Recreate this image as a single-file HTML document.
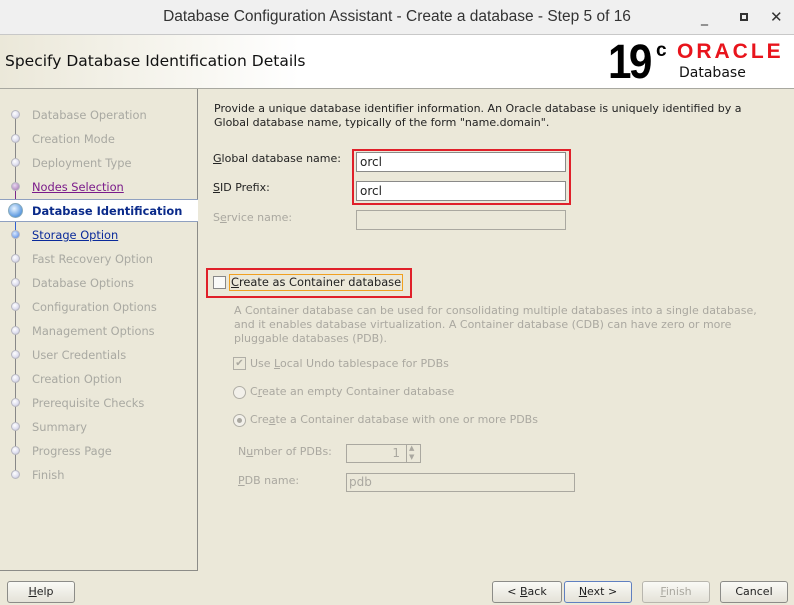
<!DOCTYPE html><html><head><style>
*{margin:0;padding:0;box-sizing:border-box}
body{width:794px;height:605px;background:#ebe8d9;font-family:"DejaVu Sans",sans-serif;font-size:11px;position:relative;overflow:hidden;color:#222}
.a{position:absolute}
.tb{left:0;top:0;width:794px;height:35px;background:#f0f0f0;border-bottom:1px solid #c8c8c8}
.hd{left:0;top:35px;width:794px;height:54px;background:linear-gradient(90deg,#ebe8d9 0,#fff 300px);border-bottom:1px solid #a8a8a0}
.lp{left:0;top:89px;width:198px;height:482px;border-right:1px solid #8c8c88;border-bottom:1px solid #8c8c88}
.st{left:32px;color:#a9a9a2;white-space:nowrap;font-size:11.4px}
.dot{left:11px;width:9px;height:9px;border-radius:50%;background:radial-gradient(circle at 40% 35%,#fff,#dde 60%,#aab);border:1px solid #b8b8c0}
.in{background:#fff;border:1px solid #8a8a88;height:20px;padding:2px 3px;font-size:12px}
.btn{height:22px;top:581px;border:1px solid #8c8c88;border-radius:3px;background:linear-gradient(#fafaf6,#e4e2d8);text-align:center;line-height:20px;font-size:11px}
.g{color:#aaa8a0}
u{text-decoration:underline}
</style></head><body>
<div class="a tb"></div>
<div class="a" style="left:0;top:8px;width:794px;text-align:center;font-family:'Liberation Sans';font-size:15.5px;color:#333">Database Configuration Assistant - Create a database - Step 5 of 16</div>
<div class="a" style="left:701px;top:10px;font-size:14px;color:#333">_</div>
<div class="a" style="left:740px;top:13px;width:8px;height:8px;border:2px solid #333"></div>
<div class="a" style="left:770px;top:8px;font-size:15px;color:#333">✕</div>
<div class="a hd"></div>
<div class="a" style="left:5px;top:52px;font-size:15.5px;color:#111">Specify Database Identification Details</div>
<div class="a" style="left:608px;top:38px;font-family:'Liberation Sans';font-weight:bold;font-size:48px;letter-spacing:-3px;color:#000;line-height:50px;transform:scaleX(.88);transform-origin:left">19</div>
<div class="a" style="left:656px;top:40px;font-family:'Liberation Sans';font-weight:bold;font-size:19px;color:#000">c</div>
<div class="a" style="left:677px;top:40px;font-family:'Liberation Sans';font-weight:bold;font-size:21px;color:#e8141c;letter-spacing:3px">ORACLE</div>
<div class="a" style="left:679px;top:65px;font-size:14px;color:#111">Database</div>
<div class="a lp"></div>
<div class="a" style="left:15px;top:112px;width:1px;height:80px;background:#888"></div>
<div class="a" style="left:15px;top:185px;width:1px;height:22px;background:#7a2a8a"></div>
<div class="a" style="left:15px;top:212px;width:1px;height:24px;background:#3060d0"></div>
<div class="a" style="left:15px;top:238px;width:1px;height:236px;background:#888"></div>
<div class="a" style="left:0;top:199px;width:198px;height:23px;background:#fff;border-top:1px solid #8fa0c0;border-bottom:1px solid #8fa0c0"></div>
<div class="a dot" style="top:110px"></div><div class="a st" style="top:108px">Database Operation</div>
<div class="a dot" style="top:134px"></div><div class="a st" style="top:132px">Creation Mode</div>
<div class="a dot" style="top:158px"></div><div class="a st" style="top:156px">Deployment Type</div>
<div class="a dot" style="top:182px;background:radial-gradient(circle at 40% 35%,#e8d8f0,#a070b0)"></div><div class="a st" style="top:180px;color:#7a1a8a"><u>Nodes Selection</u></div>
<div class="a" style="left:8px;top:203px;width:15px;height:15px;border-radius:50%;background:radial-gradient(circle at 40% 35%,#e8f4ff,#5d9ae0 70%,#3a70c0);border:1px solid #8ab"></div><div class="a st" style="top:204px;color:#0a2a8a;font-weight:bold">Database Identification</div>
<div class="a dot" style="top:230px;background:radial-gradient(circle at 40% 35%,#d8e8ff,#4a80e0)"></div><div class="a st" style="top:228px;color:#0a2a9a"><u>Storage Option</u></div>
<div class="a dot" style="top:254px"></div><div class="a st" style="top:252px">Fast Recovery Option</div>
<div class="a dot" style="top:278px"></div><div class="a st" style="top:276px">Database Options</div>
<div class="a dot" style="top:302px"></div><div class="a st" style="top:300px">Configuration Options</div>
<div class="a dot" style="top:326px"></div><div class="a st" style="top:324px">Management Options</div>
<div class="a dot" style="top:350px"></div><div class="a st" style="top:348px">User Credentials</div>
<div class="a dot" style="top:374px"></div><div class="a st" style="top:372px">Creation Option</div>
<div class="a dot" style="top:398px"></div><div class="a st" style="top:396px">Prerequisite Checks</div>
<div class="a dot" style="top:422px"></div><div class="a st" style="top:420px">Summary</div>
<div class="a dot" style="top:446px"></div><div class="a st" style="top:444px">Progress Page</div>
<div class="a dot" style="top:470px"></div><div class="a st" style="top:468px">Finish</div>

<div class="a" style="left:214px;top:102px;line-height:14px;white-space:nowrap">Provide a unique database identifier information. An Oracle database is uniquely identified by a<br>Global database name, typically of the form "name.domain".</div>
<div class="a" style="left:213px;top:152px"><u>G</u>lobal database name:</div>
<div class="a" style="left:213px;top:181px"><u>S</u>ID Prefix:</div>
<div class="a g" style="left:213px;top:211px">S<u>e</u>rvice name:</div>
<div class="a" style="left:352px;top:149px;width:219px;height:56px;border:2px solid #e0202a"></div>
<div class="a in" style="left:356px;top:152px;width:210px">orcl</div>
<div class="a in" style="left:356px;top:181px;width:210px">orcl</div>
<div class="a" style="left:356px;top:210px;width:210px;height:20px;border:1px solid #aaa8a0"></div>
<div class="a" style="left:206px;top:268px;width:206px;height:30px;border:2px solid #e0202a"></div>
<div class="a" style="left:213px;top:276px;width:13px;height:13px;border:1px solid #888;background:#fafaf8"></div>
<div class="a" style="left:229px;top:274px;border:1px solid #f0a020;padding:0 1px;font-size:11.4px;line-height:15px"><u>C</u>reate as Container database</div>
<div class="a g" style="left:234px;top:304px;line-height:14px;white-space:nowrap">A Container database can be used for consolidating multiple databases into a single database,<br>and it enables database virtualization. A Container database (CDB) can have zero or more<br>pluggable databases (PDB).</div>
<div class="a" style="left:233px;top:357px;width:13px;height:13px;border:1px solid #b0aea6;color:#aaa8a0;font-size:10px;line-height:11px;text-align:center">✔</div>
<div class="a g" style="left:250px;top:357px">Use <u>L</u>ocal Undo tablespace for PDBs</div>
<div class="a" style="left:233px;top:386px;width:13px;height:13px;border:1px solid #b0aea6;border-radius:50%;background:#f2f0ea"></div>
<div class="a g" style="left:250px;top:385px">C<u>r</u>eate an empty Container database</div>
<div class="a" style="left:233px;top:414px;width:13px;height:13px;border:1px solid #b0aea6;border-radius:50%;background:#f2f0ea"><div class="a" style="left:3px;top:3px;width:5px;height:5px;border-radius:50%;background:#aaa8a0"></div></div>
<div class="a g" style="left:250px;top:413px">Cre<u>a</u>te a Container database with one or more PDBs</div>
<div class="a g" style="left:238px;top:445px">N<u>u</u>mber of PDBs:</div>
<div class="a" style="left:346px;top:444px;width:75px;height:19px;border:1px solid #aaa8a0;color:#aaa8a0;text-align:right;padding-right:20px;line-height:17px;font-size:12px">1</div>
<div class="a" style="left:406px;top:444px;width:1px;height:19px;background:#aaa8a0"></div>
<div class="a g" style="left:409px;top:444px;font-size:7px;line-height:9px">▲<br>▼</div>
<div class="a g" style="left:238px;top:474px"><u>P</u>DB name:</div>
<div class="a" style="left:346px;top:473px;width:229px;height:19px;border:1px solid #aaa8a0;color:#aaa8a0;padding-left:2px;line-height:17px;font-size:12px">pdb</div>

<div class="a btn" style="left:7px;width:68px"><u>H</u>elp</div>
<div class="a btn" style="left:492px;width:70px">&lt; <u>B</u>ack</div>
<div class="a btn" style="left:564px;width:68px;border-color:#6080c0"><u>N</u>ext &gt;</div>
<div class="a btn" style="left:642px;width:68px;color:#aaa8a0;border-color:#b8b6ae"><u>F</u>inish</div>
<div class="a btn" style="left:720px;width:68px">Cancel</div>
</body></html>
